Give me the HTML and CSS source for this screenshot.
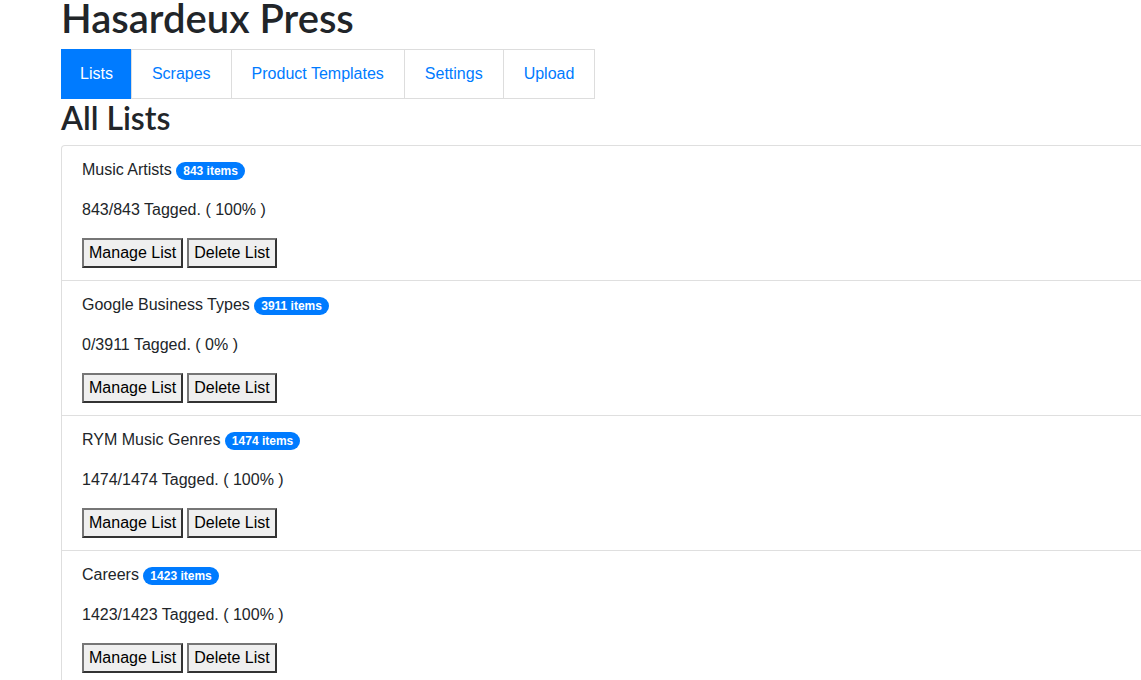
FILE: index.html
```html
<!DOCTYPE html>
<html lang="en">
<head>
<meta charset="utf-8">
<title>Hasardeux Press</title>
<link rel="stylesheet" href="styles.css">
</head>
<body>
<div class="page">
  <h1 class="title">Hasardeux Press</h1>
  <nav class="tabs">
    <a class="tab active" href="#">Lists</a>
    <a class="tab" href="#">Scrapes</a>
    <a class="tab" href="#">Product Templates</a>
    <a class="tab" href="#">Settings</a>
    <a class="tab" href="#">Upload</a>
  </nav>
  <h2 class="heading">All Lists</h2>
  <ul class="list-group">
    <li class="list-item">
      <p class="line">Music Artists <span class="badge">843 items</span></p>
      <p class="line">843/843 Tagged. ( 100% )</p>
      <div class="actions"><button class="btn">Manage List</button><button class="btn">Delete List</button></div>
    </li>
    <li class="list-item">
      <p class="line">Google Business Types <span class="badge">3911 items</span></p>
      <p class="line">0/3911 Tagged. ( 0% )</p>
      <div class="actions"><button class="btn">Manage List</button><button class="btn">Delete List</button></div>
    </li>
    <li class="list-item">
      <p class="line">RYM Music Genres <span class="badge">1474 items</span></p>
      <p class="line">1474/1474 Tagged. ( 100% )</p>
      <div class="actions"><button class="btn">Manage List</button><button class="btn">Delete List</button></div>
    </li>
    <li class="list-item">
      <p class="line">Careers <span class="badge">1423 items</span></p>
      <p class="line">1423/1423 Tagged. ( 100% )</p>
      <div class="actions"><button class="btn">Manage List</button><button class="btn">Delete List</button></div>
    </li>
  </ul>
</div>
</body>
</html>
```
FILE: styles.css
```css
html, body {
  margin: 0;
  padding: 0;
  overflow: hidden;
  background: #fff;
}
body {
  font-family: "Liberation Sans", Arial, sans-serif;
  font-size: 16px;
  line-height: 1.5;
  color: #212529;
}
.page {
  padding-left: 61px;
  width: 1200px;
}
.title {
  margin: 0;
  font-family: Lato, "Liberation Sans", sans-serif;
  font-size: 40px;
  font-weight: 600;
  line-height: 37px;
  height: 49px;
}
.tabs {
  display: flex;
  width: max-content;
}
.tab {
  display: block;
  padding: 12px 20px;
  border: 1px solid #dddddd;
  margin-left: -1px;
  color: #007bff;
  text-decoration: none;
  line-height: 24px;
}
.tab:first-child {
  margin-left: 0;
}
.tab.active {
  padding: 12px 18px;
  background: #007bff;
  border-color: #007bff;
  color: #fff;
}
.heading {
  margin: 0 0 8px 0;
  font-family: Lato, "Liberation Sans", sans-serif;
  font-size: 32px;
  font-weight: 600;
  line-height: 1.2;
  height: 38px;
}
.list-group {
  list-style: none;
  margin: 0;
  padding: 0;
  width: 1130px;
  border-top: 1px solid rgba(0,0,0,.125);
  border-left: 1px solid rgba(0,0,0,.125);
  border-top-left-radius: 4px;
}
.list-item {
  padding: 12px 20px;
  border-bottom: 1px solid rgba(0,0,0,.125);
}
.line {
  margin: 0 0 16px 0;
}
.badge {
  display: inline-block;
  padding: 3px 7px;
  font-size: 12px;
  font-weight: 700;
  line-height: 1;
  color: #fff;
  background: #007bff;
  border-radius: 10rem;
  vertical-align: 0;
}
.actions {
  display: flex;
  gap: 4px;
}
.btn {
  font-family: inherit;
  font-size: 16px;
  line-height: 24px;
  padding: 1px 5px;
  margin: 0;
  color: #000;
  background: #efefef;
  border: 2px solid;
  border-color: #767676 #333 #333 #767676;
  border-radius: 0;
}
```
